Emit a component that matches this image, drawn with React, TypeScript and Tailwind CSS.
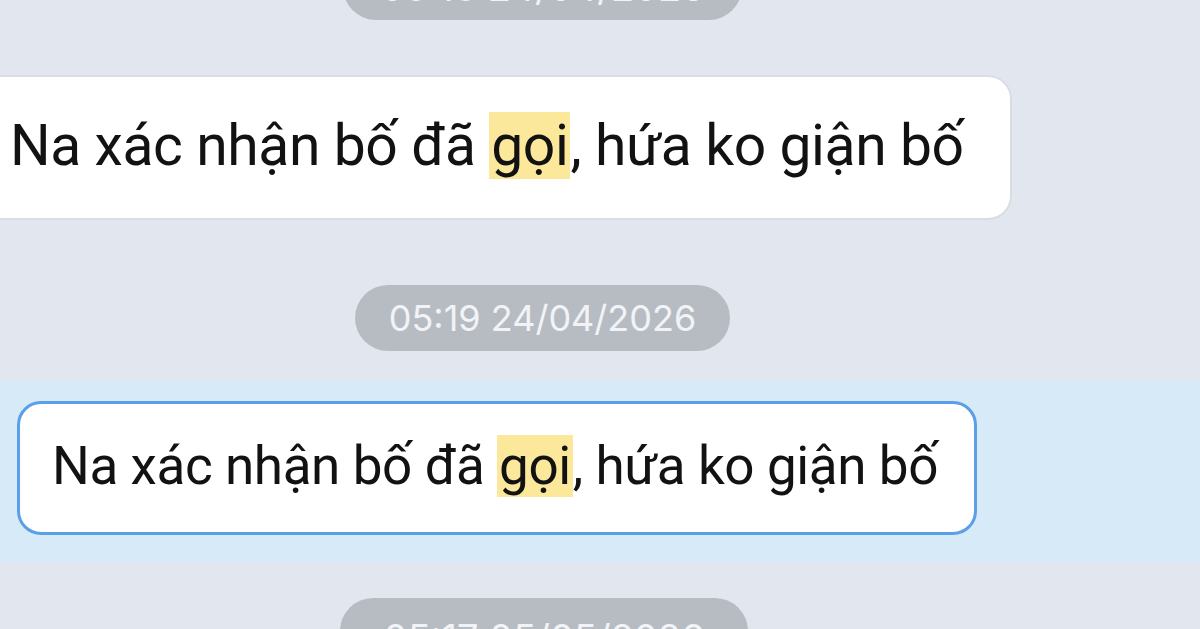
const pillFont = { fontFamily: 'Inter, "Noto Sans", sans-serif' };
const textFont = { fontFamily: 'Roboto, "Noto Sans", sans-serif' };

function TimePill({ label, className }: { label: string; className: string }) {
  return (
    <div
      className={`shrink-0 flex justify-center rounded-full bg-[#b7bcc3] text-[#f1f3f6] ${className}`}
      style={pillFont}
    >
      {label}
    </div>
  );
}

function MessageText({ size }: { size: string }) {
  return (
    <p className={`whitespace-nowrap text-[#121212] ${size}`} style={textFont}>
      Na xác nhận bố đã <span className="bg-[#fbe89b] px-[2px]">gọi</span>, hứa ko giận bố
    </p>
  );
}

export default function App() {
  return (
    <div className="w-[1200px] h-[629px] overflow-hidden bg-[#e2e7ef] flex flex-col">
      {/* previous day marker, scrolled mostly out of view */}
      <TimePill label="05:18 24/04/2026" className="mt-[-46px] ml-[343px] w-[399px] h-[66px] items-center text-[38px]" />

      {/* plain message */}
      <div className="shrink-0 mt-[55px] ml-[-22px] w-[1034px] h-[145px] rounded-[24px] bg-white border-2 border-[#d9dde3] flex items-center pl-[30px] pb-[4px]">
        <MessageText size="text-[57px] tracking-[-0.4px] leading-[70px]" />
      </div>

      <TimePill label="05:19 24/04/2026" className="mt-[65px] ml-[355px] w-[375px] h-[66px] items-center text-[36px]" />

      {/* selected message row */}
      <div className="shrink-0 mt-[29px] h-[182px] bg-[#d6eaf8] pt-[21px]">
        <div className="ml-[17px] w-[960px] h-[134px] rounded-[24px] bg-white border-[3px] border-[#5b9fe8] flex items-center pl-[32px] pb-[4px]">
          <MessageText size="text-[53px] tracking-[-0.4px] leading-[64px]" />
        </div>
      </div>

      <TimePill label="05:17 05/05/2026" className="mt-[36px] ml-[340px] w-[408px] h-[66px] items-start pt-[12px] text-[38px]" />
    </div>
  );
}
